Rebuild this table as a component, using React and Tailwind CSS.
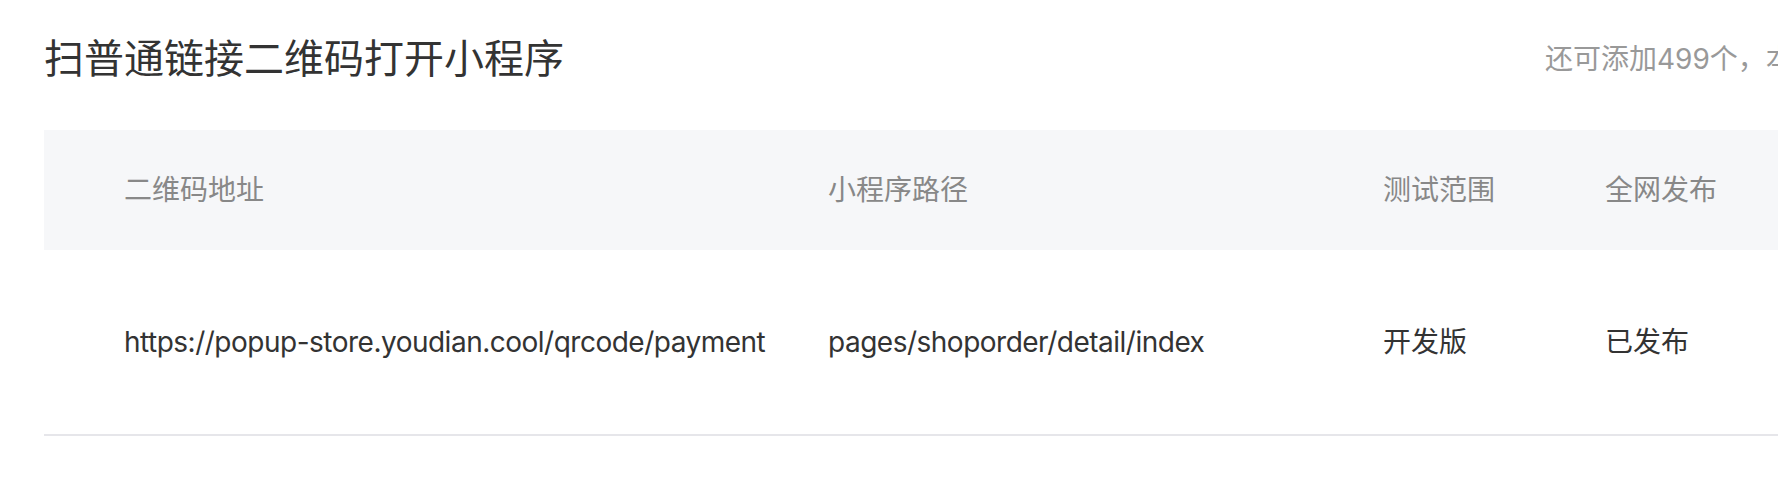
import React from "react";

const rows = [
  {
    url: "https://popup-store.youdian.cool/qrcode/payment",
    path: "pages/shoporder/detail/index",
    scope: "开发版",
    status: "已发布",
  },
];

export default function App() {
  return (
    <div
      className="w-[1778px] h-[482px] overflow-hidden bg-white"
      style={{ fontFamily: "Inter, 'Noto Sans CJK SC', sans-serif" }}
    >
      <div className="w-[2000px] pl-[44px]">
        <div className="flex items-center h-[118px] mb-[12px]">
          <h1 className="w-[1501px] text-[40px] leading-[56px] text-[#333333]">
            扫普通链接二维码打开小程序
          </h1>
          <span className="whitespace-nowrap text-[28px] leading-[40px] text-[#999999]">
            还可添加499个，本月还可修改
          </span>
        </div>

        <div className="flex items-center h-[120px] bg-[#f6f7f9] text-[28px] text-[#888888]">
          <div className="w-[784px] pl-[80px]">二维码地址</div>
          <div className="w-[555px]">小程序路径</div>
          <div className="w-[222px]">测试范围</div>
          <div className="flex-1">全网发布</div>
        </div>

        {rows.map((r) => (
          <div
            key={r.url}
            className="flex items-center h-[186px] border-b-2 border-[#e6e6ea] text-[28px] text-[#333333]"
          >
            <div className="w-[784px] pl-[80px] tracking-[-0.5px]">{r.url}</div>
            <div className="w-[555px] tracking-[-0.5px]">{r.path}</div>
            <div className="w-[222px]">{r.scope}</div>
            <div className="flex-1">{r.status}</div>
          </div>
        ))}
      </div>
    </div>
  );
}
